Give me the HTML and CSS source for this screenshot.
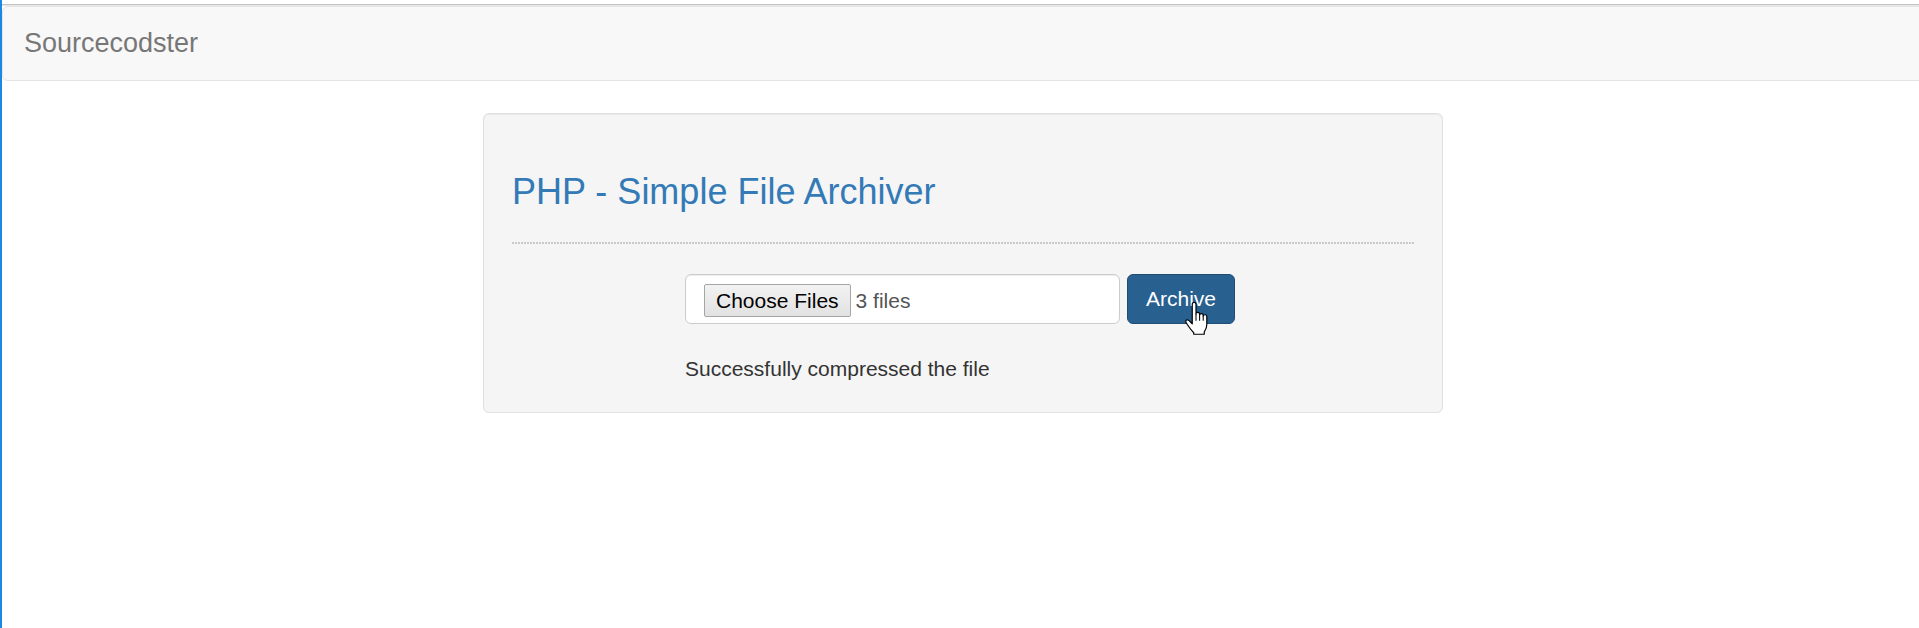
FILE: index.html
```html
<!DOCTYPE html>
<html lang="en">

<head>
    <meta charset="UTF-8">
    <meta name="viewport" content="width=device-width, initial-scale=1.0">
    <title>PHP - Simple File Archiver</title>
    <link rel="stylesheet" href="styles.css">
</head>

<body>
    <div class="frame">
        <!-- Header -->
        <div class="top-rule"></div>
        <nav class="navbar">
            <a href="#" class="brand">Sourcecodster</a>
        </nav>

        <!-- Main Content -->
        <main class="page">
            <div class="well">
                <h3 class="title">PHP - Simple File Archiver</h3>
                <hr class="dotted">

                <div class="form-col">
                    <form class="form-row" action="#" method="POST">
                        <label class="file-input">
                            <span class="file-btn">Choose Files</span>
                            <span class="file-name">3 files</span>
                        </label>
                        <button type="button" class="btn-archive">
                            Archive
                            <!-- mouse pointer over the button -->
                            <svg class="cursor" width="24" height="33" viewBox="0 0 16 22">
                                <path d="M5.5 1.5 C5.5 0.7 6.1 0.3 6.8 0.3 C7.5 0.3 8 0.7 8 1.5 V8 C8 7.3 8.5 6.9 9.2 6.9 C9.9 6.9 10.4 7.4 10.4 8.1 V8.8 C10.4 8.1 10.9 7.7 11.6 7.7 C12.3 7.7 12.8 8.2 12.8 8.9 V9.6 C12.8 8.9 13.3 8.5 14 8.5 C14.7 8.5 15.2 9 15.2 9.7 V15 C15.2 17.5 14 19 13.5 20 V21.5 H6.5 V20.5 C5.5 19.5 3.5 17 2.2 15 C1.2 13.6 0.8 12.8 1.4 12.2 C2.1 11.6 3.2 12 4 13 L5.5 14.5 Z"
                                    fill="#fff" stroke="#000" stroke-width="0.8" stroke-linejoin="round" />
                                <path d="M8 8 V12.5 M10.4 8.8 V12.5 M12.8 9.6 V12.5" fill="none" stroke="#000" stroke-width="0.7" />
                            </svg>
                        </button>
                    </form>
                    <p class="message">Successfully compressed the file</p>
                </div>
            </div>
        </main>
    </div>
</body>

</html>
```

FILE: styles.css
```css
body {
    margin: 0;
    font-family: "Liberation Sans", Arial, sans-serif;
    background: white;
    overflow: hidden;
}

/* blue strip on the left edge of the window */
.frame {
    border-left: 2px solid #1e87e5;
    min-height: 628px;
    padding-top: 4px;
    box-sizing: border-box;
}

.top-rule {
    height: 1px;
    background: #c6c6c6;
    border-bottom: 1px solid #e6e6e6;
}

/* Navbar */
.navbar {
    height: 75px;
    box-sizing: border-box;
    margin-right: -10px;
    background: #f8f8f8;
    border: 1px solid #e4e4e4;
    border-radius: 6px;
    padding-left: 21px;
}

.brand {
    display: inline-block;
    font-size: 27px;
    line-height: 73px;
    color: #777;
    text-decoration: none;
}

/* Main */
.page {
    display: flex;
    justify-content: center;
    padding-left: 5px;
    margin-top: 32px;
}

.well {
    width: 960px;
    box-sizing: border-box;
    padding: 28px;
    background: #f5f5f5;
    border: 1px solid #e0e0e0;
    border-radius: 6px;
    box-shadow: inset 0 1px 1px rgba(0, 0, 0, 0.05);
}

.title {
    margin: 30px 0 0;
    font-size: 36px;
    line-height: 40px;
    font-weight: 500;
    color: #337ab7;
}

.dotted {
    margin: 30px 0 0;
    height: 2px;
    border: 0;
    background: repeating-linear-gradient(to right, #c9c9c9 0 2px, transparent 2px 3px);
}

.form-col {
    width: 550px;
    margin: 30px 0 0 173px;
}

.form-row {
    display: flex;
    gap: 7px;
    margin: 0;
}

/* file input */
.file-input {
    display: flex;
    align-items: center;
    width: 435px;
    height: 50px;
    box-sizing: border-box;
    padding: 3px 18px 0;
    background: white;
    border: 1px solid #ccc;
    border-radius: 6px;
    box-shadow: inset 0 1px 1px rgba(0, 0, 0, 0.075);
    font-size: 21px;
}

.file-btn {
    height: 33px;
    box-sizing: border-box;
    padding: 0 11px;
    line-height: 31px;
    color: #000;
    background: linear-gradient(#f2f2f2, #e2e2e2);
    border: 1px solid #a6a6a6;
    border-radius: 2px;
}

.file-name {
    margin-left: 5px;
    color: #555;
}

.btn-archive {
    position: relative;
    width: 108px;
    height: 50px;
    padding: 0;
    font-family: inherit;
    font-size: 21px;
    color: white;
    background: #286090;
    border: 1px solid #204d74;
    border-radius: 6px;
    cursor: pointer;
}

.cursor {
    position: absolute;
    left: 56px;
    top: 27px;
}

.message {
    margin: 30px 0 0;
    font-size: 21px;
    line-height: 30px;
    color: #333;
}
```
